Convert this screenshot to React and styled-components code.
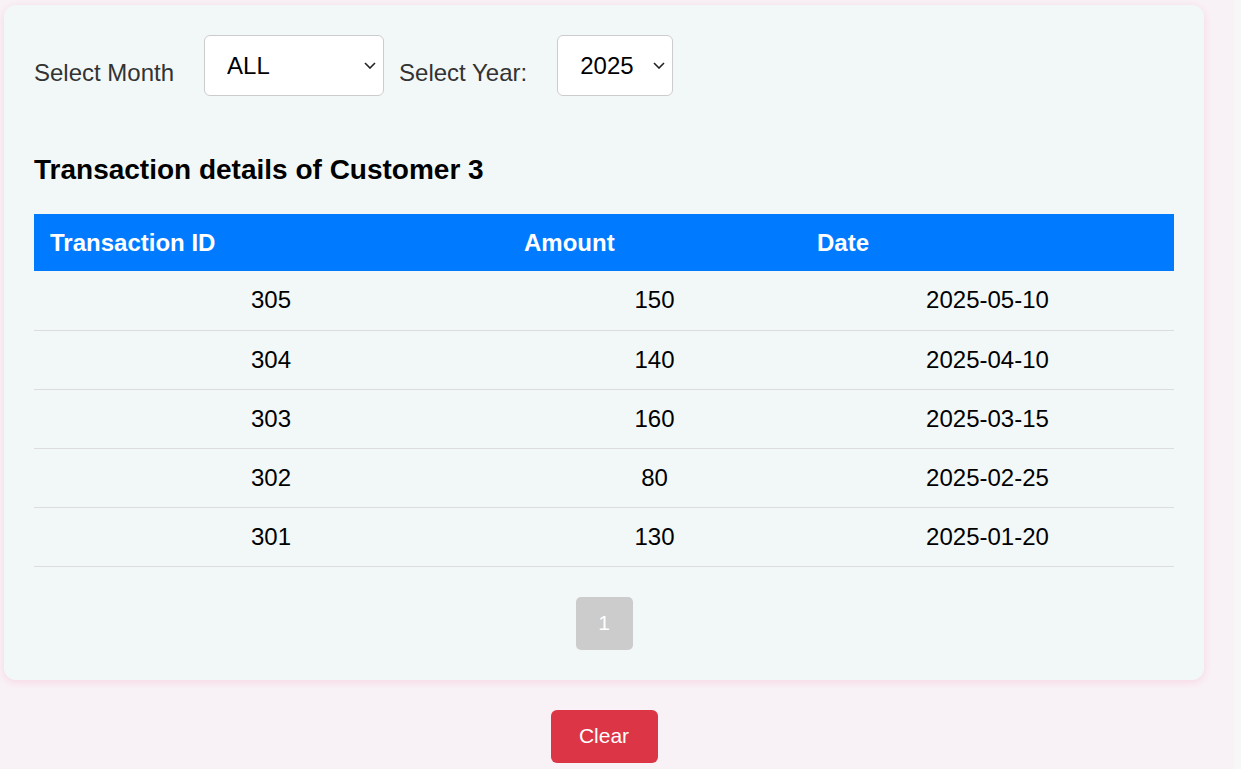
import React, { useState } from 'react';
import styled, { createGlobalStyle } from 'styled-components';

const GlobalStyle = createGlobalStyle`
  html, body {
    margin: 0;
    padding: 0;
    background-color: #f7f7f7;
    font-family: "Liberation Sans", Arial, sans-serif;
  }
`;

// chevron drawn for the select arrow
const chevron = encodeURIComponent(
  '<svg xmlns="http://www.w3.org/2000/svg" width="12" height="7" viewBox="0 0 12 7"><path d="M1 1l5 5 5-5" fill="none" stroke="#222" stroke-width="1.6"/></svg>'
);

const Page = styled.div`
  width: 1234px;
  min-height: 769px;
  box-sizing: border-box;
  background-color: #f8f2f6;
  padding: 5px 4px;
`;

const Wrapper = styled.div`
  width: 1200px;
  display: flex;
  flex-direction: column;
  align-items: center;
`;

const Card = styled.div`
  width: 100%;
  box-sizing: border-box;
  background-color: #f2f8f8;
  border-radius: 12px;
  box-shadow: 0 2px 8px rgba(255, 120, 160, 0.22);
  padding: 30px;
`;

const FilterRow = styled.div`
  display: flex;
  align-items: center;
`;

const Label = styled.label`
  font-size: 24px;
  color: #333;
  margin-top: 14px;
  margin-right: 30px;
`;

const Select = styled.select`
  appearance: none;
  -webkit-appearance: none;
  height: 61px;
  width: ${props => props.width}px;
  box-sizing: border-box;
  margin-right: 15px;
  padding: 0 24px 0 22px;
  font-family: "Liberation Sans", Arial, sans-serif;
  font-size: 24px;
  color: #000;
  background-color: #fff;
  background-image: url("data:image/svg+xml,${chevron}");
  background-repeat: no-repeat;
  background-position: right 7px center;
  border: 1px solid #ccc;
  border-radius: 6px;
`;

const Title = styled.h3`
  font-size: 28px;
  font-weight: bold;
  color: #000;
  margin: 58px 0 28px;
  line-height: 1.15;
`;

const Table = styled.table`
  width: 100%;
  border-collapse: collapse;
  table-layout: fixed;
`;

const Th = styled.th`
  background-color: #007bff;
  color: #fff;
  font-size: 24px;
  font-weight: bold;
  text-align: left;
  padding: 14px 16px;
  height: 57px;
  box-sizing: border-box;
  width: ${props => props.width}px;
`;

const Td = styled.td`
  font-size: 24px;
  color: #000;
  text-align: center;
  padding: 15px;
  height: 59px;
  box-sizing: border-box;
  border-bottom: 1px solid #ddd;
`;

const Pagination = styled.div`
  display: flex;
  justify-content: center;
  margin-top: 30px;
`;

const PageButton = styled.button`
  width: 57px;
  height: 53px;
  border: none;
  border-radius: 5px;
  background-color: ${props => (props.active ? '#cccccc' : '#007bff')};
  color: #fff;
  font-family: "Liberation Sans", Arial, sans-serif;
  font-size: 21px;
`;

const ClearButton = styled.button`
  margin-top: 30px;
  width: 107px;
  height: 53px;
  border: none;
  border-radius: 6px;
  background-color: #dc3545;
  color: #fff;
  font-family: "Liberation Sans", Arial, sans-serif;
  font-size: 21px;
`;

const transactions = [
  { id: 305, amount: 150, date: '2025-05-10' },
  { id: 304, amount: 140, date: '2025-04-10' },
  { id: 303, amount: 160, date: '2025-03-15' },
  { id: 302, amount: 80, date: '2025-02-25' },
  { id: 301, amount: 130, date: '2025-01-20' },
];

const App = () => {
  const [month, setMonth] = useState('ALL');
  const [year, setYear] = useState('2025');

  return (
    <Page>
      <GlobalStyle />
      <Wrapper>
        <Card>
          <FilterRow>
            <Label>Select Month</Label>
            <Select width={180} value={month} onChange={e => setMonth(e.target.value)}>
              <option value="ALL">ALL</option>
              <option value="1">January</option>
              <option value="2">February</option>
              <option value="3">March</option>
              <option value="4">April</option>
              <option value="5">May</option>
            </Select>
            <Label>Select Year:</Label>
            <Select width={116} value={year} onChange={e => setYear(e.target.value)}>
              <option value="2025">2025</option>
              <option value="2024">2024</option>
            </Select>
          </FilterRow>

          <Title>Transaction details of Customer 3</Title>

          <Table>
            <thead>
              <tr>
                <Th width={474}>Transaction ID</Th>
                <Th width={293}>Amount</Th>
                <Th width={373}>Date</Th>
              </tr>
            </thead>
            <tbody>
              {transactions.map(t => (
                <tr key={t.id}>
                  <Td>{t.id}</Td>
                  <Td>{t.amount}</Td>
                  <Td>{t.date}</Td>
                </tr>
              ))}
            </tbody>
          </Table>

          <Pagination>
            <PageButton active>1</PageButton>
          </Pagination>
        </Card>
        <ClearButton>Clear</ClearButton>
      </Wrapper>
    </Page>
  );
};

export default App;
